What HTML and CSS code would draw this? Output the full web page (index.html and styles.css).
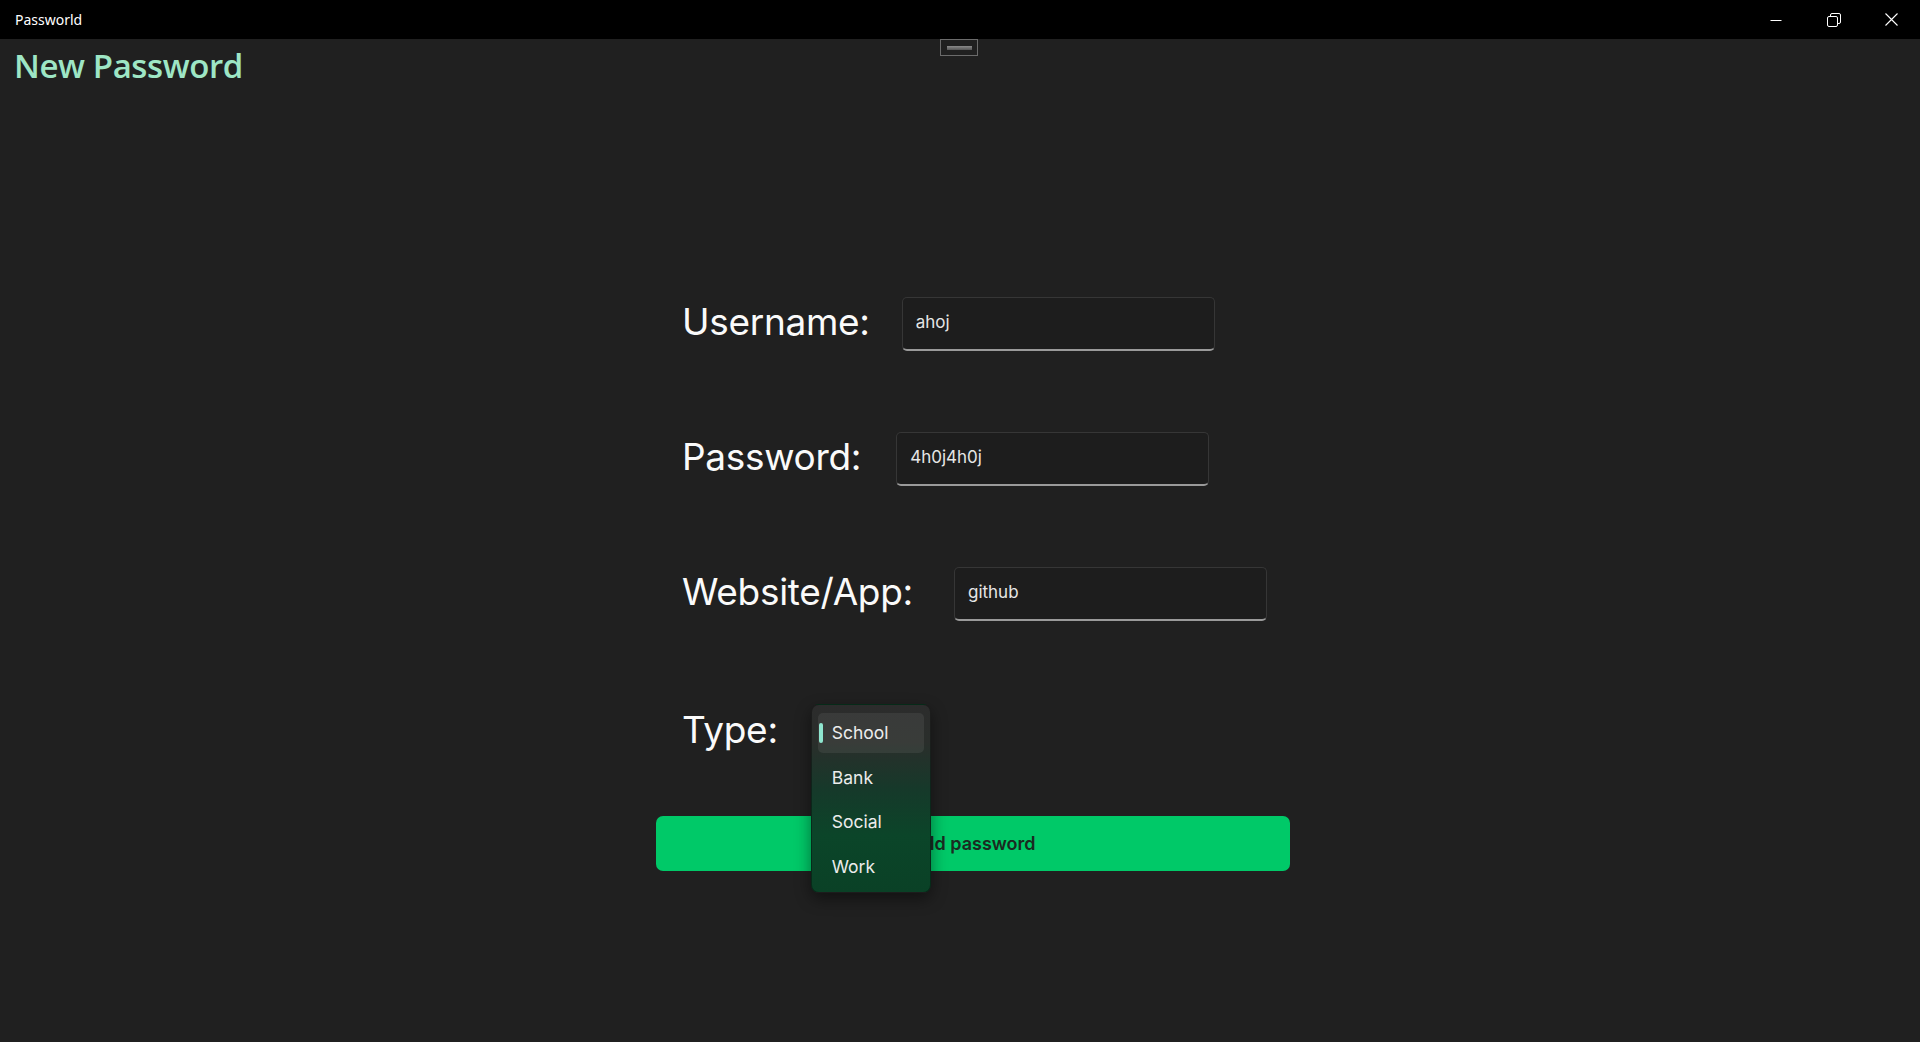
FILE: index.html
```html
<!DOCTYPE html>
<html lang="en">
<head>
<meta charset="utf-8">
<title>Passworld</title>
<link rel="stylesheet" href="styles.css">
</head>
<body>
<div class="titlebar">
  <div class="app-title">Passworld</div>
  <div class="controls">
    <div class="ctl">
      <svg width="12" height="12" viewBox="0 0 12 12"><path d="M0.5 6.5h11" stroke="#fff" stroke-width="1" fill="none"/></svg>
    </div>
    <div class="ctl">
      <svg width="14" height="14" viewBox="0 0 14 14" fill="none" stroke="#fff" stroke-width="1"><rect x="0.5" y="3.5" width="10" height="10" rx="1.5"/><path d="M3.5 3.5V2a1.5 1.5 0 0 1 1.5-1.5h7A1.5 1.5 0 0 1 13.5 2v7A1.5 1.5 0 0 1 12 10.5h-1.5"/></svg>
    </div>
    <div class="ctl">
      <svg width="13" height="13" viewBox="0 0 13 13" fill="none" stroke="#fff" stroke-width="1.1"><path d="M0.5 0.5l12 12M12.5 0.5l-12 12"/></svg>
    </div>
  </div>
</div>
<div class="grip"><span class="grip-bar"></span></div>
<main class="page">
  <h1 class="heading">New Password</h1>
  <form class="form">
    <div class="row row-user">
      <label class="label">Username:</label>
      <div class="input">ahoj</div>
    </div>
    <div class="row row-pass">
      <label class="label">Password:</label>
      <div class="input">4h0j4h0j</div>
    </div>
    <div class="row row-site">
      <label class="label">Website/App:</label>
      <div class="input">github</div>
    </div>
    <div class="row row-type">
      <label class="label">Type:</label>
      <div class="combo">
        <ul class="menu">
          <li class="item selected"><span class="accent"></span>School</li>
          <li class="item">Bank</li>
          <li class="item">Social</li>
          <li class="item">Work</li>
        </ul>
      </div>
    </div>
    <button type="button" class="add">Add password</button>
  </form>
</main>
</body>
</html>
```
FILE: styles.css
```css
* { box-sizing: border-box; }
html, body { margin: 0; padding: 0; }
body {
  width: 1920px;
  height: 1042px;
  background: #202020;
  overflow: hidden;
  font-family: "Inter", "Liberation Sans", sans-serif;
  color: #fff;
  position: relative;
}
.titlebar {
  height: 39px;
  background: #000;
  display: flex;
  align-items: center;
  justify-content: space-between;
}
.app-title {
  font-family: "Noto Sans", "Open Sans", sans-serif;
  font-size: 14px;
  color: #fff;
  padding-left: 15px;
  padding-bottom: 1px;
}
.controls { display: flex; height: 100%; }
.ctl {
  width: 57.5px;
  height: 100%;
  display: flex;
  align-items: center;
  justify-content: center;
}
.grip {
  position: absolute;
  left: 940px;
  top: 39px;
  width: 38px;
  height: 17px;
  border: 1px solid #6b6b6b;
  display: flex;
  align-items: center;
  justify-content: center;
}
.grip-bar {
  width: 25px;
  height: 4px;
  background: linear-gradient(#8a8a8a, #555);
}
.page { padding: 0; }
.heading {
  margin: 0;
  padding: 4px 0 0 14px;
  font-family: "Open Sans", "Noto Sans", sans-serif;
  font-weight: 600;
  font-size: 33px;
  letter-spacing: -0.4px;
  line-height: 46px;
  color: #9ee6c5;
}
.form {
  margin-left: 656px;
  width: 634px;
  padding-top: 208px;
  display: flex;
  flex-direction: column;
}
.row {
  display: flex;
  align-items: center;
  gap: 32px;
  padding-left: 26px;
  height: 54px;
}
.row-pass, .row-site { margin-top: 81px; }
.row-type { margin-top: 81px; height: 54px; gap: 33px; }
.label {
  font-size: 37px;
  font-weight: 400;
  letter-spacing: -0.3px;
  color: #fafafa;
  line-height: 1;
  padding-bottom: 6px;
}
.row-type .label { padding-bottom: 0; }
.input {
  width: 313px;
  height: 54px;
  background: #1d1d1d;
  border: 1px solid #363636;
  border-bottom: 2px solid #9a9a9a;
  border-radius: 5px;
  padding: 0 13px 3px;
  display: flex;
  align-items: center;
  font-size: 17px;
  color: #e6e6e6;
}
.row-pass .input { margin-left: 3px; }
.row-site .input { margin-left: 9px; }
.combo {
  position: relative;
  width: 120px;
  height: 32px;
}
.menu {
  position: absolute;
  left: 0;
  top: -9px;
  width: 120px;
  height: 189px;
  margin: 0;
  padding: 8px 6px 6px;
  list-style: none;
  border-radius: 8px;
  border: 1px solid rgba(0,0,0,0.35);
  background: linear-gradient(180deg, #2c2c2c 0%, #2a2e2b 20%, #16392a 45%, #0b4529 70%, #0a4126 100%);
  box-shadow: 0 6px 16px rgba(0,0,0,0.45);
  display: flex;
  flex-direction: column;
  gap: 5px;
  z-index: 2;
}
.item {
  position: relative;
  height: 40px;
  border-radius: 5px;
  padding-left: 14px;
  display: flex;
  align-items: center;
  font-size: 17.5px;
  color: #ececec;
}
.item.selected { background: rgba(255,255,255,0.07); }
.accent {
  position: absolute;
  left: 1px;
  top: 10px;
  width: 4px;
  height: 20px;
  border-radius: 2px;
  background: #8fe6cf;
}
.add {
  margin-top: 60px;
  height: 55px;
  width: 634px;
  border: none;
  border-radius: 7px;
  background: #00c968;
  font-family: "Inter", "Liberation Sans", sans-serif;
  font-size: 18px;
  font-weight: 600;
  color: #1b2a21;
  padding: 0;
}
```
